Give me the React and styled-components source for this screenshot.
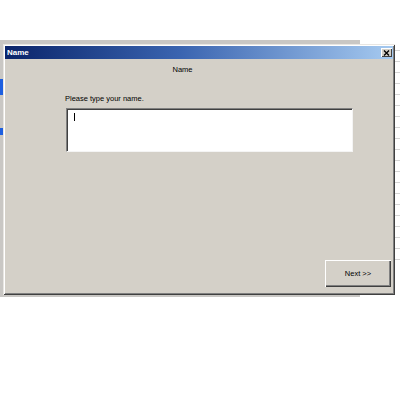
import { createGlobalStyle } from 'styled-components';
import styled from 'styled-components';

const GlobalStyle = createGlobalStyle`
  body {
    margin: 0;
    background: #fff;
    font-family: "Liberation Sans", Arial, sans-serif;
  }
`;

const Desktop = styled.div`
  position: relative;
  width: 400px;
  height: 400px;
  overflow: hidden;
  background: #fff;
`;

// window of the app behind the dialog, only its edges show
const BackWindow = styled.div`
  position: absolute;
  left: 0;
  top: 40px;
  width: 360px;
  height: 257px;
  background: #c9c7c4;
`;

const SheetEdge = styled.div`
  position: absolute;
  left: 393px;
  top: 40px;
  width: 7px;
  height: 230px;
  background: repeating-linear-gradient(
    to bottom,
    #fff 0,
    #fff 10px,
    #d6d6d6 10px,
    #d6d6d6 11px
  );
`;

const BlueMark = styled.div`
  position: absolute;
  left: 0;
  top: ${(p) => p.$top}px;
  width: 3px;
  height: ${(p) => p.$h}px;
  background: #1d5fe0;
`;

const Dialog = styled.div`
  position: absolute;
  left: 3px;
  top: 44px;
  width: 392px;
  height: 251px;
  box-sizing: border-box;
  display: flex;
  flex-direction: column;
  padding: 2px;
  background: #d4d0c8;
  box-shadow: inset 1px 1px #e8e6e2, inset -1px -1px #404040,
    inset 2px 2px #fff, inset -2px -2px #808080;
`;

const TitleBar = styled.div`
  height: 13px;
  display: flex;
  align-items: center;
  justify-content: space-between;
  padding: 0 1px 0 2px;
  background: linear-gradient(to right, #0a246a 0%, #3a64b0 45%, #a6caf0 100%);
`;

const Title = styled.span`
  color: #fff;
  font-weight: bold;
  font-size: 8px;
  line-height: 13px;
`;

const CloseButton = styled.div`
  width: 11px;
  height: 9px;
  display: flex;
  align-items: center;
  justify-content: center;
  background: #d4d0c8;
  box-shadow: inset 1px 1px #fff, inset -1px -1px #404040;
`;

const Body = styled.div`
  flex: 1;
  display: flex;
  flex-direction: column;
  padding: 6px 2px 6px 60px;
`;

const Caption = styled.div`
  width: 235px;
  text-align: center;
  font-size: 7.5px;
  line-height: 10px;
  color: #000;
`;

const Prompt = styled.div`
  margin-top: 19px;
  font-size: 7.5px;
  line-height: 10px;
  color: #000;
`;

const TextBox = styled.div`
  margin-top: 4px;
  margin-left: 1px;
  width: 287px;
  height: 44px;
  box-sizing: border-box;
  padding: 4px 7px;
  background: #fff;
  border: 1px solid;
  border-color: #808080 #f4f4f4 #f4f4f4 #808080;
  box-shadow: inset 1px 1px #404040;
`;

const Caret = styled.div`
  width: 1px;
  height: 8px;
  background: #000;
`;

const Spacer = styled.div`
  flex: 1;
`;

const Button = styled.div`
  align-self: flex-end;
  width: 66px;
  height: 27px;
  box-sizing: border-box;
  display: flex;
  align-items: center;
  justify-content: center;
  font-size: 7.5px;
  color: #000;
  background: #d4d0c8;
  box-shadow: inset 1px 1px #fff, inset -1px -1px #404040,
    inset -2px -2px #808080;
`;

export default function App() {
  return (
    <Desktop>
      <GlobalStyle />
      <BackWindow />
      <SheetEdge />
      <BlueMark $top={79} $h={16} />
      <BlueMark $top={128} $h={7} />
      <Dialog>
        <TitleBar>
          <Title>Name</Title>
          <CloseButton>
            <svg width="7" height="6" viewBox="0 0 7 6">
              <path d="M1 0.5 L6 5.5 M6 0.5 L1 5.5" stroke="#000" strokeWidth="1.4" />
            </svg>
          </CloseButton>
        </TitleBar>
        <Body>
          <Caption>Name</Caption>
          <Prompt>Please type your name.</Prompt>
          <TextBox>
            <Caret />
          </TextBox>
          <Spacer />
          <Button>Next &gt;&gt;</Button>
        </Body>
      </Dialog>
    </Desktop>
  );
}
